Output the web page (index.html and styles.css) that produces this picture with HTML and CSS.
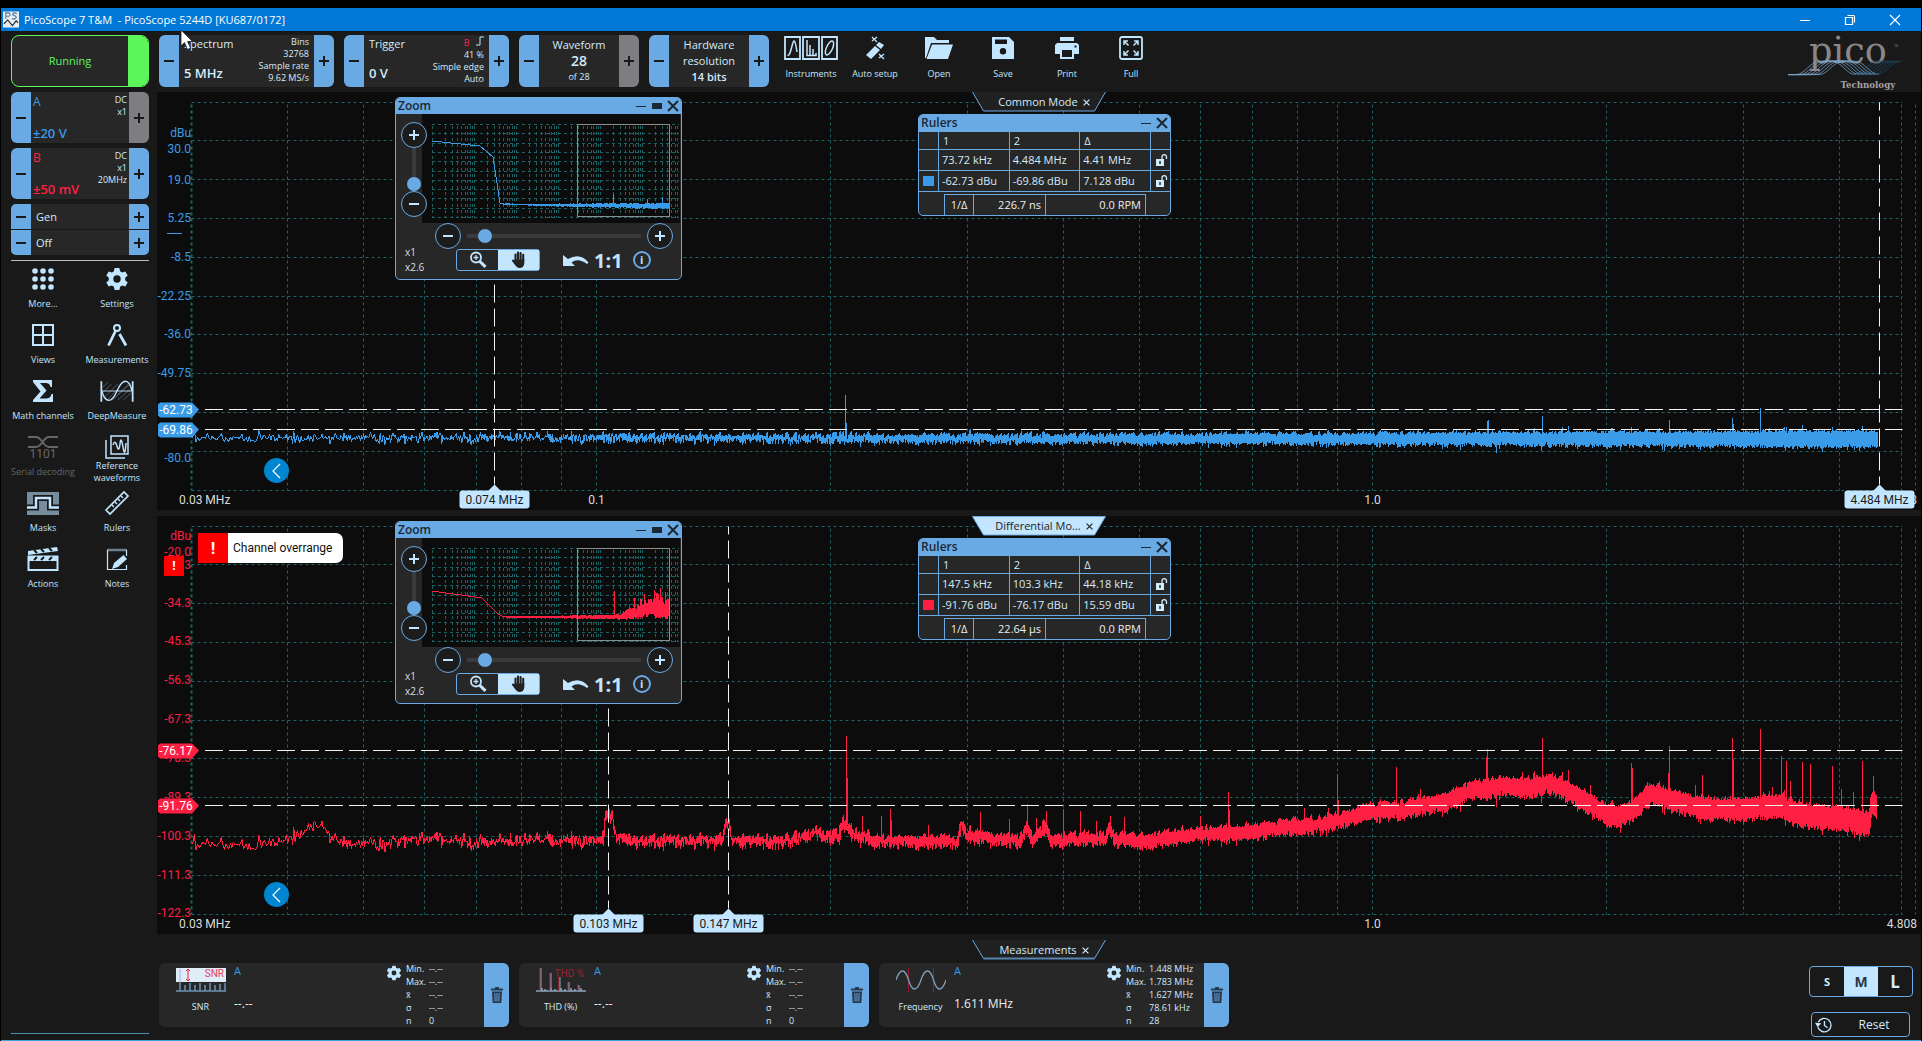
FILE: index.html
```html
<!DOCTYPE html>
<html lang="en">
<head>
<meta charset="utf-8">
<title>PicoScope 7 T&amp;M</title>
<link rel="stylesheet" href="styles.css">
</head>
<body>
<svg class="sprite" aria-hidden="true">
  <symbol id="minus" viewBox="0 0 12 12"><path d="M1 6H11" stroke="currentColor" stroke-width="2"/></symbol>
  <symbol id="plus" viewBox="0 0 12 12"><path d="M1 6H11M6 1V11" stroke="currentColor" stroke-width="2"/></symbol>
  <symbol id="cross" viewBox="0 0 12 12"><path d="M1 1L11 11M11 1L1 11" stroke="currentColor" stroke-width="2"/></symbol>
  <symbol id="dash" viewBox="0 0 12 12"><path d="M1 6.500H11" stroke="currentColor"/></symbol>
  <symbol id="block" viewBox="0 0 12 12"><path d="M1 3H11V9H1Z" fill="currentColor"/></symbol>
  <symbol id="gear" viewBox="0 0 24 24"><path fill="currentColor" fill-rule="evenodd" d="M9.600 1h4.800l.7 3.200 2 1.200 3.200-1 2.400 4.200-2.500 2.200v2.400l2.500 2.200-2.400 4.200-3.200-1-2 1.200-.7 3.200H9.600l-.7-3.200-2-1.200-3.200 1-2.400-4.200 2.500-2.200v-2.400L1.300 8.600l2.400-4.200 3.200 1 2-1.200zM12 8.300a3.700 3.700 0 1 0 0 7.400 3.700 3.700 0 0 0 0-7.400z"/></symbol>
  <symbol id="lock" viewBox="0 0 14 14"><path d="M2 6H10V13H2Z" fill="currentColor"/><path d="M8 6V4A2 2.200 0 0 1 12.500 4V6" fill="none" stroke="currentColor" stroke-width="1.300"/><path d="M6 8V11" stroke="#282828" stroke-width="1.500"/></symbol>
  <symbol id="trash" viewBox="0 0 14 18"><path fill="currentColor" d="M5 1H9V2.500H13V4.500H1V2.500H5ZM2 5.500H12L11.300 17H2.700Z"/><path d="M4.800 7L5.200 15.500M7 7V15.500M9.200 7L8.800 15.500" stroke="#6aaae4" stroke-width=".9"/></symbol>
  <symbol id="hand" viewBox="0 0 18 18"><path d="M5.500 10V3.500M8 9V1.500M10.600 9V2M13.200 10V3.800M3 9.500L6.500 14" fill="none" stroke="currentColor" stroke-width="2.100" stroke-linecap="round"/><path d="M4.500 8.500H14.300V12Q14 17 9.500 17Q6.500 17 5 13Z" fill="currentColor"/></symbol>
  <symbol id="magnify" viewBox="0 0 18 18"><circle cx="7" cy="6.500" r="5" fill="none" stroke="currentColor" stroke-width="1.800"/><path d="M4.500 6.500H9.500M7 4V9" stroke="currentColor" stroke-width="1.300"/><path d="M10.800 10.300L16.500 15.800" stroke="currentColor" stroke-width="3"/></symbol>
  <symbol id="undo" viewBox="0 0 26 14"><path d="M0 2V13H12L8.500 9.500Q15 4.500 24 11L25.500 9.500Q17 -1 5 6Z" fill="currentColor"/></symbol>
</svg>

<header class="titlebar">
  <svg class="appicon" viewBox="0 0 17 17"><path d="M0 0H17V17H0Z" fill="#e8eef2"/><path d="M3 8V1.500H5.500Q7.500 1.500 7.500 3.300T5.500 5H3M14.500 2.500Q13.500 1.300 11.500 1.500Q9.800 2 10.500 3.800L13.500 5Q15 7 12.500 7.800H9.500" fill="none" stroke="#4a7f98" stroke-width="1.200"/><path d="M1 13L5 9L10 15L14 10L16 12" fill="none" stroke="#222" stroke-width="1.200"/></svg>
  <h1>PicoScope 7 T&amp;M &nbsp;- PicoScope 5244D [KU687/0172]</h1>
  <div class="wincontrols">
    <button aria-label="Minimise"><svg viewBox="0 0 12 12"><path d="M1 6.500H11" stroke="#fff"/></svg></button>
    <button aria-label="Restore"><svg viewBox="0 0 12 12"><path d="M1.500 3.500H8.500V10.500H1.500ZM3.500 1.500H9.500Q10.500 1.500 10.500 2.500V8.500" fill="none" stroke="#fff" stroke-width="1.200"/></svg></button>
    <button aria-label="Close"><svg viewBox="0 0 12 12"><path d="M1 1L11 11M11 1L1 11" stroke="#fff" stroke-width="1.200"/></svg></button>
  </div>
</header>

<div class="app">
  <aside class="sidebar">
    <button class="running"><span>Running</span></button>

    <section class="stepper channel ch-a">
      <button class="step" aria-label="Lower range A"><svg><use href="#minus"/></svg></button>
      <div class="body"><b class="name">A</b><ul><li>DC</li><li>x1</li></ul><b class="range">±20 V</b></div>
      <button class="step off" aria-label="Raise range A"><svg><use href="#plus"/></svg></button>
    </section>
    <section class="stepper channel ch-b">
      <button class="step" aria-label="Lower range B"><svg><use href="#minus"/></svg></button>
      <div class="body"><b class="name">B</b><ul><li>DC</li><li>x1</li><li>20MHz</li></ul><b class="range">±50 mV</b></div>
      <button class="step" aria-label="Raise range B"><svg><use href="#plus"/></svg></button>
    </section>
    <section class="gen">
      <div class="genrow"><button class="step" aria-label="Previous generator"><svg><use href="#minus"/></svg></button><span>Gen</span><button class="step" aria-label="Next generator"><svg><use href="#plus"/></svg></button></div>
      <div class="genrow"><button class="step" aria-label="Previous output"><svg><use href="#minus"/></svg></button><span>Off</span><button class="step" aria-label="Next output"><svg><use href="#plus"/></svg></button></div>
    </section>
    <hr>
    <nav class="menu">
      <button><svg viewBox="0 0 24 24"><g fill="currentColor"><circle cx="4" cy="4" r="2.800"/><circle cx="12" cy="4" r="2.800"/><circle cx="20" cy="4" r="2.800"/><circle cx="4" cy="12" r="2.800"/><circle cx="12" cy="12" r="2.800"/><circle cx="20" cy="12" r="2.800"/><circle cx="4" cy="20" r="2.800"/><circle cx="12" cy="20" r="2.800"/><circle cx="20" cy="20" r="2.800"/></g></svg><span>More...</span></button>
      <button><svg viewBox="0 0 24 24"><use href="#gear"/></svg><span>Settings</span></button>
      <button><svg viewBox="0 0 24 24"><path d="M2 2H22V22H2ZM12 2V22M2 12H22" fill="none" stroke="currentColor" stroke-width="2"/></svg><span>Views</span></button>
      <button><svg viewBox="0 0 24 24"><circle cx="12" cy="5" r="3" fill="none" stroke="currentColor" stroke-width="2"/><path d="M12 1V3" stroke="currentColor" stroke-width="2"/><path d="M10.500 8L3.500 22.500M14.500 11L21 22.500" stroke="currentColor" stroke-width="2.800"/></svg><span>Measurements</span></button>
      <button><svg viewBox="0 0 24 24"><path d="M2 1H21V8H19.500Q19 4 14.500 4H9L15.500 11.500L8.500 19.500H15Q19.500 19.500 20.500 15H22V23H2V21L9.500 12.500L2 3Z" fill="currentColor"/></svg><span>Math channels</span></button>
      <button><svg class="wide" viewBox="0 0 38 24"><path d="M3 8L9 2M3 14L13 4M4 20L20 4M8 22L20 10M14 22L34 4M20 22L35 9M26 22L35 14M20 16L32 4" stroke="#5d7586" stroke-width=".8"/><path d="M1.500 1V24M36.500 1V24" stroke="currentColor" stroke-width="2"/><path d="M2 12H36" stroke="currentColor"/><path d="M2 12C6 26 13 26 19 12S32 -3 36 12" fill="none" stroke="currentColor" stroke-width="1.500"/></svg><span>DeepMeasure</span></button>
      <button disabled><svg class="wide" viewBox="0 0 32 24"><path d="M1 2H9C15 2 16 12 22 12H31M1 12H9C15 12 16 2 22 2H31" fill="none" stroke="currentColor" stroke-width="2"/><text x="16" y="23" text-anchor="middle">1101</text></svg><span>Serial decoding</span></button>
      <button><svg viewBox="0 0 24 24"><path d="M6 1H23V19H6ZM1 5V23H20" fill="none" stroke="currentColor" stroke-width="1.500"/><path d="M8 10Q10 4 12 11T15 9T18 12T21 8" fill="none" stroke="currentColor" stroke-width="1.500"/></svg><span>Reference waveforms</span></button>
      <button><svg class="wide" viewBox="0 0 32 24"><path d="M0 1H32V24H0Z" fill="#788d9b"/><path d="M0 16.500H9V7H23V16.500H32" fill="none" stroke="#191919" stroke-width="6"/><path d="M0 16.500H9V7H23V16.500H32" fill="none" stroke="currentColor" stroke-width="2.500"/></svg><span>Masks</span></button>
      <button><svg viewBox="0 0 24 24"><path d="M1 19L19 1L23 5L5 23Z" fill="none" stroke="currentColor" stroke-width="1.700"/><path d="M7 14L9 16M10 11L12 13M13 8L15 10M16 5L18 7" stroke="currentColor" stroke-width="1.400"/></svg><span>Rulers</span></button>
      <button><svg class="wide" viewBox="0 0 32 24"><path d="M1.500 9.500H30.500V23H1.500Z" fill="none" stroke="currentColor" stroke-width="2"/><path d="M1 4L30 0L31 4L1 8ZM1 9H31V14H1Z" fill="currentColor"/><path d="M7 3L10 6M14 2L17 5M22 1L25 4M7 13L10 10M14 13L17 10M22 13L25 10" stroke="#191919" stroke-width="2"/></svg><span>Actions</span></button>
      <button><svg viewBox="0 0 24 24"><path d="M2.500 3V22.500H21.500V18M21.500 9V3" fill="none" stroke="currentColor" stroke-width="1.200"/><path d="M2.500 3H21.500" stroke="currentColor" stroke-width="2.500" stroke-dasharray="1 1"/><path d="M7 22L9 16L18.500 8L22 12L13 20Z" fill="currentColor"/></svg><span>Notes</span></button>
    </nav>
    <hr class="last">
  </aside>

  <main>
    <div class="toolbar">
      <section class="stepper spectrum">
        <button class="step" aria-label="Lower frequency"><svg><use href="#minus"/></svg></button>
        <div class="body"><span class="name">Spectrum</span><ul><li>Bins</li><li>32768</li><li>Sample rate</li><li>9.62 MS/s</li></ul><b class="value">5 MHz</b></div>
        <button class="step" aria-label="Raise frequency"><svg><use href="#plus"/></svg></button>
      </section>
      <section class="stepper trigger">
        <button class="step" aria-label="Lower trigger"><svg><use href="#minus"/></svg></button>
        <div class="body"><span class="name">Trigger</span><ul><li><span class="redtext">B</span> <svg class="edge" viewBox="0 0 8 10"><path d="M0 9H4V1H8" fill="none" stroke="#c2e6ff"/></svg></li><li>41 %</li><li>Simple edge</li><li>Auto</li></ul><b class="value">0 V</b></div>
        <button class="step" aria-label="Raise trigger"><svg><use href="#plus"/></svg></button>
      </section>
      <section class="stepper narrow">
        <button class="step" aria-label="Previous waveform"><svg><use href="#minus"/></svg></button>
        <div class="body"><span>Waveform</span><b class="count">28</b><small>of 28</small></div>
        <button class="step off" aria-label="Next waveform"><svg><use href="#plus"/></svg></button>
      </section>
      <section class="stepper narrow">
        <button class="step" aria-label="Lower resolution"><svg><use href="#minus"/></svg></button>
        <div class="body"><span>Hardware resolution</span><b>14 bits</b></div>
        <button class="step" aria-label="Raise resolution"><svg><use href="#plus"/></svg></button>
      </section>
      <nav class="tools">
        <button><svg class="xwide" viewBox="0 0 54 24"><path d="M1 1H16V23H1ZM19 1H35V23H19ZM38 1H53V23H38Z" fill="none" stroke="currentColor" stroke-width="1.800"/><path d="M3.500 19C5 20 6 18 8 10S11 3 13 16M23 4V19.500H32V17M26 9V19M29 13V19" fill="none" stroke="currentColor" stroke-width="1.500"/><ellipse cx="45.500" cy="12" rx="3" ry="7.500" transform="rotate(25 45.500 12)" fill="none" stroke="currentColor" stroke-width="1.500"/></svg><span>Instruments</span></button>
        <button><svg viewBox="0 0 24 24"><path d="M3 19L12 10L17 14L8 23ZM13 9L16 6L21 9L18 13Z" fill="currentColor"/><path d="M9 1L14 6M14 1L9 5M16 18L21 23M21 18L16 22" stroke="currentColor" stroke-width="1.300"/></svg><span>Auto setup</span></button>
        <button><svg class="folder" viewBox="0 0 28 24"><path d="M0 1H9L12 4H24V7H6L1 22H0Z" fill="currentColor"/><path d="M7 8.500H28L23 23H1.500Z" fill="currentColor"/></svg><span>Open</span></button>
        <button><svg viewBox="0 0 24 24"><path fill-rule="evenodd" d="M1 1H18L23 6V23H1ZM4 3.500V8H16V3.500ZM12 12A3.200 3.200 0 1 0 12 18.400A3.200 3.200 0 0 0 12 12Z" fill="currentColor"/></svg><span>Save</span></button>
        <button><svg viewBox="0 0 24 24"><path fill-rule="evenodd" d="M5 1H19V5H5ZM2 7H22L24 9V18H19V23H5V18H0V9ZM7 14V21H17V14ZM19.500 9.500V11.500H21.500V9.500Z" fill="currentColor"/></svg><span>Print</span></button>
        <button><svg viewBox="0 0 24 24"><rect x="1" y="1" width="22" height="22" rx="2" fill="none" stroke="currentColor" stroke-width="1.800"/><path d="M5 9V5H9M5 5L9.500 9.500M15 5H19V9M19 5L14.500 9.500M5 15V19H9M5 19L9.500 14.500M19 15V19H15M19 19L14.500 14.500" fill="none" stroke="currentColor" stroke-width="1.500"/></svg><span>Full</span></button>
      </nav>
      <svg class="logo" viewBox="0 0 122 58" role="img" aria-label="pico Technology">
        <text class="pico" x="62" y="29" text-anchor="middle">pico</text>
        <text class="reg" x="110" y="13">®</text>
        <g id="waves" fill="none" stroke-width=".8"></g>
        <text class="tech" x="111" y="55" text-anchor="end">Technology</text>
      </svg>
    </div>

    <section class="panel" data-chart="a">
      <svg class="plot"></svg>
      <div class="tab"><svg viewBox="0 0 134 20"><path d="M.5 0L11.500 19H122.500L133.500 0" fill="#202020" stroke="#6aaae4"/></svg><span>Common Mode</span><button aria-label="Close view"><svg><use href="#cross"/></svg></button></div>
      <button class="back" aria-label="Back"><svg viewBox="0 0 24 24"><path d="M15 5L8 12L15 19" fill="none" stroke="#fff" stroke-width="1.200"/></svg></button>
      <section class="window zoom">
        <header><h2>Zoom</h2><svg><use href="#dash"/></svg><svg><use href="#block"/></svg><svg><use href="#cross"/></svg></header>
        <div class="zoomview">
          <div class="vctl"><button class="round" aria-label="Zoom in vertically"><svg><use href="#plus"/></svg></button><input type="range" class="vrange" aria-label="Vertical zoom" value="0"><button class="round" aria-label="Zoom out vertically"><svg><use href="#minus"/></svg></button></div>
          <svg class="mini" viewBox="0 0 258 109"></svg>
        </div>
        <div class="hctl"><button class="round" aria-label="Zoom out horizontally"><svg><use href="#minus"/></svg></button><input type="range" class="hrange" aria-label="Horizontal zoom" value="7"><button class="round" aria-label="Zoom in horizontally"><svg><use href="#plus"/></svg></button></div>
        <div class="zoomtools"><p>x1<br>x2.6</p><div class="pair"><button aria-label="Marquee"><svg><use href="#magnify"/></svg></button><button class="on" aria-label="Pan"><svg><use href="#hand"/></svg></button></div><button class="plain undo" aria-label="Undo"><svg><use href="#undo"/></svg></button><button class="plain one">1:1</button><button class="info" aria-label="Information">i</button></div>
      </section>
      <section class="window rulers">
        <header><h2>Rulers</h2><svg><use href="#dash"/></svg><svg><use href="#cross"/></svg></header>
        <table>
          <tr><th></th><th>1</th><th>2</th><th>Δ</th><th></th></tr>
          <tr><td></td><td>73.72 kHz</td><td>4.484 MHz</td><td>4.41 MHz</td><td><svg><use href="#lock"/></svg></td></tr>
          <tr><td><i class="swatch blue"></i></td><td>-62.73 dBu</td><td>-69.86 dBu</td><td>7.128 dBu</td><td><svg><use href="#lock"/></svg></td></tr>
        </table>
        <div class="inverse"><span>1/Δ</span><span>226.7 ns</span><span>0.0 RPM</span></div>
      </section>
    </section>

    <section class="panel" data-chart="b">
      <svg class="plot"></svg>
      <div class="tab light"><svg viewBox="0 0 134 20"><path d="M.5 .5L11.500 19H122.500L133.500 .5Z" fill="#c2e6ff" stroke="#6aaae4"/></svg><span>Differential Mo...</span><button aria-label="Close view"><svg><use href="#cross"/></svg></button></div>
      <button class="back" aria-label="Back"><svg viewBox="0 0 24 24"><path d="M15 5L8 12L15 19" fill="none" stroke="#fff" stroke-width="1.200"/></svg></button>
      <b class="flag">!</b>
      <p class="overrange"><b>!</b><span>Channel overrange</span></p>
      <section class="window zoom">
        <header><h2>Zoom</h2><svg><use href="#dash"/></svg><svg><use href="#block"/></svg><svg><use href="#cross"/></svg></header>
        <div class="zoomview">
          <div class="vctl"><button class="round" aria-label="Zoom in vertically"><svg><use href="#plus"/></svg></button><input type="range" class="vrange" aria-label="Vertical zoom" value="0"><button class="round" aria-label="Zoom out vertically"><svg><use href="#minus"/></svg></button></div>
          <svg class="mini" viewBox="0 0 258 109"></svg>
        </div>
        <div class="hctl"><button class="round" aria-label="Zoom out horizontally"><svg><use href="#minus"/></svg></button><input type="range" class="hrange" aria-label="Horizontal zoom" value="7"><button class="round" aria-label="Zoom in horizontally"><svg><use href="#plus"/></svg></button></div>
        <div class="zoomtools"><p>x1<br>x2.6</p><div class="pair"><button aria-label="Marquee"><svg><use href="#magnify"/></svg></button><button class="on" aria-label="Pan"><svg><use href="#hand"/></svg></button></div><button class="plain undo" aria-label="Undo"><svg><use href="#undo"/></svg></button><button class="plain one">1:1</button><button class="info" aria-label="Information">i</button></div>
      </section>
      <section class="window rulers">
        <header><h2>Rulers</h2><svg><use href="#dash"/></svg><svg><use href="#cross"/></svg></header>
        <table>
          <tr><th></th><th>1</th><th>2</th><th>Δ</th><th></th></tr>
          <tr><td></td><td>147.5 kHz</td><td>103.3 kHz</td><td>44.18 kHz</td><td><svg><use href="#lock"/></svg></td></tr>
          <tr><td><i class="swatch red"></i></td><td>-91.76 dBu</td><td>-76.17 dBu</td><td>15.59 dBu</td><td><svg><use href="#lock"/></svg></td></tr>
        </table>
        <div class="inverse"><span>1/Δ</span><span>22.64 µs</span><span>0.0 RPM</span></div>
      </section>
    </section>

    <footer class="measurements">
      <div class="tab"><svg viewBox="0 0 134 20"><path d="M.5 0L11.500 18.500H122.500L133.500 0" fill="#202020" stroke="#6aaae4"/><path d="M11.500 18.500H122.500" stroke="#5684b0" stroke-width="2"/></svg><span>Measurements</span><button aria-label="Close measurements"><svg><use href="#cross"/></svg></button></div>
      <div class="cards">
        <article class="card">
          <div class="kind"><svg viewBox="0 0 50 24"><path d="M0 0H50V14H0Z" fill="#e0edf8"/><path d="M0 23H50M4 14V23M9 17V23M14 15V23M19 17V23M24 15V23M29 17V23M34 15V23M39 17V23M44 16V23M49 15V23" stroke="#6f93b4" stroke-width="1.500"/><path d="M4 1V14" stroke="#a9cbe8" stroke-width="1.500"/><path d="M12 1V13M10 3L12 1L14 3M10 11L12 13L14 11" fill="none" stroke="#e8203a"/><text x="48" y="9" text-anchor="end">SNR</text></svg><span>SNR</span></div>
          <div class="reading"><b>A</b><output>--.--</output></div>
          <svg class="cog"><use href="#gear"/></svg>
          <dl><dt>Min.</dt><dd>--.--</dd><dt>Max.</dt><dd>--.--</dd><dt>x̄</dt><dd>--.--</dd><dt>σ</dt><dd>--.--</dd><dt>n</dt><dd>0</dd></dl>
          <button class="bin" aria-label="Delete SNR"><svg><use href="#trash"/></svg></button>
        </article>
        <article class="card">
          <div class="kind"><svg class="thd" viewBox="0 0 50 24"><path d="M0 23H50M6 20V23M9 21V23M15 20V23M19 21V23M25 20V23M29 21V23M35 20V23M39 21V23M45 20V23" stroke="#8ba6bf" stroke-width="1.500"/><path d="M4 0V23M14 5V23M23 9V23M32 14V23M42 17V23" stroke="#b82036" stroke-width="1.200"/><path d="M5 0V23M15 5V23M24 9V23M33 14V23M43 17V23" stroke="#8ba6bf"/><text x="48" y="9" text-anchor="end">THD %</text></svg><span>THD (%)</span></div>
          <div class="reading"><b>A</b><output>--.--</output></div>
          <svg class="cog"><use href="#gear"/></svg>
          <dl><dt>Min.</dt><dd>--.--</dd><dt>Max.</dt><dd>--.--</dd><dt>x̄</dt><dd>--.--</dd><dt>σ</dt><dd>--.--</dd><dt>n</dt><dd>0</dd></dl>
          <button class="bin" aria-label="Delete THD"><svg><use href="#trash"/></svg></button>
        </article>
        <article class="card">
          <div class="kind"><svg viewBox="0 0 50 24"><path d="M12.500 0V24M37.500 0V24" stroke="#8c1f2c"/><path d="M0 12C4 0 9 0 12.500 12S21 24 25 12S34 0 37.500 12S46 24 50 12" fill="none" stroke="#7f9fbd" stroke-width="1.300"/></svg><span>Frequency</span></div>
          <div class="reading"><b>A</b><output>1.611 MHz</output></div>
          <svg class="cog"><use href="#gear"/></svg>
          <dl><dt>Min.</dt><dd>1.448 MHz</dd><dt>Max.</dt><dd>1.783 MHz</dd><dt>x̄</dt><dd>1.627 MHz</dd><dt>σ</dt><dd>78.61 kHz</dd><dt>n</dt><dd>28</dd></dl>
          <button class="bin" aria-label="Delete Frequency"><svg><use href="#trash"/></svg></button>
        </article>
        <div class="sizing">
          <div class="sizes"><button class="s">S</button><button class="m">M</button><button class="l">L</button></div>
          <button class="reset"><svg viewBox="0 0 20 20"><path d="M3.500 7A7.500 7.500 0 1 1 3.200 12.500" fill="none" stroke="#c2e6ff" stroke-width="1.500"/><path d="M0 7.500L7 8L3 12.500Z" fill="#c2e6ff"/><path d="M10.500 5.500V10.500L14 13" fill="none" stroke="#c2e6ff" stroke-width="1.500"/></svg><span>Reset</span></button>
        </div>
      </div>
    </footer>
  </main>
</div>
<svg class="cursor" viewBox="0 0 14 22" aria-hidden="true"><path d="M1 1V17L4.500 13.500L7.500 20.500L10.500 19L7.500 12.500H12.500Z" fill="#fff" stroke="#222" stroke-width=".8"/></svg>
<script src="plots.js"></script>
</body>
</html>
```
FILE: styles.css
```css
* { box-sizing: border-box; }
html, body { height: 100%; }
body {
  margin: 0; padding: 8px 1px 0; background: #000; color: #d4ebfb;
  font: 12px/16px "Open Sans", "Noto Sans", sans-serif;
  display: flex; flex-direction: column;
}
button { font: inherit; color: inherit; background: none; border: 0; padding: 0; margin: 0; }
h1, h2, p, ul, dl, dd { margin: 0; padding: 0; }
ul { list-style: none; }
svg { display: block; flex: none; }
.sprite { position: absolute; width: 0; height: 0; }
.cursor { position: absolute; left: 180px; top: 29px; width: 14px; height: 22px; }

.titlebar { display: flex; align-items: center; height: 23px; flex: none; background: #0078d7; padding: 0 4px 0 2px; gap: 5px; }
.titlebar h1 { font-size: 11px; font-weight: 400; color: #fff; flex: 1; }
.appicon { width: 16px; height: 17px; }
.wincontrols { display: flex; }
.wincontrols button { width: 45px; display: grid; place-items: center; }
.wincontrols svg { width: 12px; height: 12px; }

.app { flex: 1; min-height: 0; display: grid; grid-template-columns: 156px minmax(0, 1fr); background: #191919; border-bottom: 1px solid #3fa7dc; }

.sidebar { display: flex; flex-direction: column; gap: 5px; padding: 4px 0 6px; }
.running, .stepper.channel, .gen, hr { margin: 0 8px 0 10px; }
.running { height: 52px; border: 1px solid #5ff55f; border-radius: 8px; background: #272727; color: #5ff564; display: flex; align-items: center; overflow: hidden; font-size: 11px; }
.running span { flex: 1; }
.running::after { content: ""; width: 20px; align-self: stretch; background: #5cf55a; }
.stepper { display: flex; height: 52px; border-radius: 6px; overflow: hidden; background: #272727; }
.channel { height: 51px; }
.step { width: 20px; flex: none; background: #6aaae4; color: #191919; display: grid; place-items: center; }
.step svg { width: 12px; height: 12px; }
.step.off { background: #7d7d82; }
.stepper .body { flex: 1; position: relative; display: grid; grid-template-columns: auto 1fr; grid-template-rows: auto 1fr; padding: 2px 2px 1px; }
.body ul { grid-column: 2; grid-row: 1 / 3; text-align: right; font-size: 9px; line-height: 12px; }
.channel .range, .stepper .value { grid-column: 1; grid-row: 2; align-self: end; white-space: nowrap; font-weight: 600; font-size: 13px; }
.channel .name { font-weight: 400; }
.channel .range { width: 0; padding-bottom: 1px; }
.ch-a b { color: #3a99e8; }
.ch-b b { color: #ff1f43; }
.gen { display: grid; gap: 1px; border-radius: 5px; overflow: hidden; height: 51px; }
.genrow { display: flex; align-items: center; background: #272727; height: 25px; }
.genrow span { flex: 1; padding-left: 5px; font-size: 11px; }
.genrow .step { height: 25px; }
hr { border: 0; border-top: 1px solid #bcbcbc; width: 138px; height: 1px; }
hr.last { margin-top: auto; border-color: #4d8fae; }
.menu { display: grid; grid-template-columns: 74px 74px; grid-auto-rows: 56px; margin-left: 5px; padding-top: 1px; }
.menu button, .tools button { display: flex; flex-direction: column; align-items: center; color: #c2e6ff; font-size: 9px; line-height: 12px; }
.menu span { min-height: 26px; width: 74px; display: grid; place-items: center; }
.menu svg { width: 24px; height: 24px; overflow: visible; }
.menu svg.wide { width: 34px; }
.menu button:disabled { color: #666; }
.menu text { font: 12px Roboto, sans-serif; fill: currentColor; }

main { display: flex; flex-direction: column; min-width: 0; }
.toolbar { height: 61px; flex: none; display: flex; align-items: flex-start; gap: 10px; padding: 4px 13px 0 2px; }
.spectrum { width: 175px; }
.trigger { width: 165px; }
.spectrum .body, .trigger .body { padding: 1px 5px 2px; }
.stepper .value { padding-bottom: 4px; }
.spectrum .name, .trigger .name { font-size: 11px; }
.spectrum ul { margin-left: -20px; }
.redtext { color: #ff1f43; }
.edge { display: inline-block; width: 8px; height: 10px; margin-left: 4px; }
.narrow { width: 120px; }
.narrow .body { display: flex; flex-direction: column; align-items: center; justify-content: center; text-align: center; font-size: 11px; padding: 0; }
.narrow b { font-weight: 600; font-size: 11px; }
.narrow .count { font-size: 14px; }
.narrow small { font-size: 9px; }
.tools { display: flex; padding-top: 1px; }
.tools button { width: 64px; gap: 8px; white-space: nowrap; }
.tools svg { width: 24px; height: 24px; }
.tools svg.xwide { width: 54px; }
.tools svg.folder { width: 28px; }
.logo { width: 122px; height: 56px; margin-left: auto; overflow: visible; }
.pico { font: 38px "DejaVu Serif", serif; fill: #8a8686; }
.reg { font: 6px "Liberation Serif", serif; fill: #8a8686; }
.tech { font: bold 9px "DejaVu Serif", serif; fill: #a5a1a1; }

.panel { position: relative; flex: 1; min-height: 360px; background: #0c0c0c; }
.panel + .panel { margin-top: 6px; }
.plot { position: absolute; inset: 0; width: 100%; height: 100%; }
.plot text { font: 12px Roboto, sans-serif; }
.tab { position: absolute; left: 882px; margin-left: -67px; top: 0; width: 134px; height: 20px; display: flex; align-items: center; justify-content: center; gap: 5px; font-size: 11px; }
.tab > svg { position: absolute; inset: 0; width: 134px; height: 20px; }
.tab span, .tab button { position: relative; }
.tab span { padding-left: 10px; }
.tab button svg { width: 7px; height: 7px; }
.tab.light { color: #222; }
.back { position: absolute; left: 107px; bottom: 27px; width: 25px; height: 25px; border-radius: 50%; background: #0085d1; display: grid; place-items: center; }
.back svg { width: 24px; height: 24px; }
.flag { position: absolute; left: 7px; top: 40px; width: 20px; height: 20px; background: #f00; color: #fff; text-align: center; line-height: 20px; }
.overrange { position: absolute; left: 41px; top: 17px; height: 30px; display: flex; align-items: center; background: #fff; color: #111; border-radius: 0 7px 7px 0; font: 12px/30px Roboto, sans-serif; }
.overrange b { width: 30px; background: #f00; color: #fff; text-align: center; font-size: 17px; }
.overrange span { padding: 0 11px 0 5px; }

.window { position: absolute; background: #272727; border: 1px solid #6aaae4; border-radius: 5px; overflow: hidden; }
.window header { height: 16px; background: #6aaae4; color: #1c2733; display: flex; align-items: center; gap: 4px; padding: 0 2px; }
.window h2 { flex: 1; font-size: 12px; font-weight: 600; line-height: 16px; }
.window header svg { width: 12px; height: 12px; }
.zoom { left: 238px; top: 5px; width: 287px; height: 183px; display: flex; flex-direction: column; }
.zoomview { display: flex; height: 109px; flex: none; }
.vctl { width: 26px; padding: 8px 0 0 10px; display: flex; flex-direction: column; align-items: center; position: relative; }
.round { width: 26px; height: 26px; flex: none; border: 1px solid #6aaae4; border-radius: 50%; display: grid; place-items: center; background: #1c1c1c; color: #c2e6ff; }
.round svg { width: 12px; height: 12px; }
.mini { width: 258px; height: 109px; background: #0c0c0c; }
.vctl .round { z-index: 1; }
input[type=range] { appearance: none; margin: 0; background: none; }
.hrange { flex: 1; min-width: 0; height: 14px; }
.vrange { writing-mode: vertical-lr; direction: rtl; width: 14px; height: 43px; margin: 0 0 3px; }
input::-webkit-slider-runnable-track { background: #3a3a3a; }
.hrange::-webkit-slider-runnable-track { height: 4px; }
.vrange::-webkit-slider-runnable-track { width: 4px; }
input::-webkit-slider-thumb { appearance: none; width: 14px; height: 14px; border-radius: 50%; background: #6aaae4; }
.hrange::-webkit-slider-thumb { margin-top: -5px; }
.vrange::-webkit-slider-thumb { margin-left: -5px; }
.hctl { display: flex; align-items: center; gap: 6px; height: 26px; flex: none; padding: 0 8px 0 39px; }
.zoomtools { display: flex; align-items: center; padding-left: 9px; height: 22px; flex: none; font-size: 10px; line-height: 15px; }
.zoomtools p { width: 51px; color: #ddd; }
.pair { display: flex; width: 84px; height: 22px; border: 1px solid #6aaae4; border-radius: 3px; color: #c2e6ff; margin-right: 23px; }
.pair button { flex: 1; display: grid; place-items: center; }
.pair .on { background: #c2e6ff; color: #222; }
.pair svg { width: 18px; height: 18px; }
.plain { color: #c2e6ff; }
.undo svg { width: 26px; height: 14px; }
.one { font-size: 20px; font-weight: 700; padding: 0 10px 0 5px; }
.info { width: 18px; height: 18px; border: 2px solid #6aaae4; border-radius: 50%; color: #c2e6ff; font-weight: 700; font-size: 11px; line-height: 14px; }

.rulers { left: 761px; top: 22px; width: 253px; height: 102px; font-size: 11px; }
.rulers table { border-collapse: collapse; width: 253px; margin-left: -1px; table-layout: fixed; }
.rulers th, .rulers td { border: 1px solid #6aaae4; padding: 0 0 0 3px; text-align: left; font-weight: 400; height: 21px; line-height: 16px; white-space: nowrap; color: #d4ebfb; }
.rulers th { height: 18px; padding-left: 4px; }
.rulers th:first-child, .rulers th:last-child { width: 20px; }
.rulers td svg { width: 14px; height: 14px; }
.swatch { display: block; width: 11px; height: 10px; margin-left: 1px; }
.swatch.blue { background: #3a99e8; }
.swatch.red { background: #ff1f43; }
.inverse { display: flex; margin: 2px 24px 0 25px; border: 1px solid #6aaae4; border-bottom: 0; height: 22px; line-height: 20px; color: #eee; }
.inverse span { border-left: 1px solid #6aaae4; text-align: right; padding-right: 4px; width: 72px; }
.inverse span:first-child { width: 28px; border: 0; text-align: center; padding: 0; }
.inverse span:last-child { flex: 1; }

.measurements { position: relative; height: 106px; flex: none; padding: 29px 8px 0 2px; }
.measurements .tab { top: 6px; }
.cards { display: flex; gap: 10px; }
.card { width: 350px; height: 64px; display: flex; background: #272727; border-radius: 6px; overflow: hidden; }
.kind { width: 66px; padding: 5px 0 0 17px; display: flex; flex-direction: column; gap: 7px; align-items: center; font-size: 9px; white-space: nowrap; }
.kind svg { width: 50px; height: 24px; }
.kind text { font: 10px Roboto, sans-serif; fill: #e8405a; }
.kind .thd text { fill: #a02030; }
.reading { flex: 1; display: flex; flex-direction: column; gap: 17px; padding-left: 9px; font-size: 12px; color: #eee; }
.reading b { font-weight: 400; color: #3a99e8; font-size: 11px; }
.cog { width: 16px; height: 16px; margin: 2px 4px 0 0; color: #c2e6ff; }
dl { width: 78px; display: grid; grid-template-columns: 23px 1fr; grid-auto-rows: 13px; font-size: 9px; line-height: 12px; white-space: nowrap; }
.bin { width: 25px; background: #6aaae4; color: #26384a; display: grid; place-items: center; }
.bin svg { width: 14px; height: 18px; }
.sizing { margin-left: auto; display: flex; flex-direction: column; align-items: flex-end; gap: 15px; padding-top: 3px; }
.sizes { display: flex; width: 104px; height: 31px; border: 1px solid #6aaae4; border-radius: 4px; overflow: hidden; font-weight: 700; }
.sizes button { flex: 1; }
.sizes .s { font-size: 11px; }
.sizes .m { font-size: 14px; background: #c2e6ff; color: #26384a; }
.sizes .l { font-size: 17px; }
.reset { width: 99px; height: 25px; margin-right: 3px; border: 1px solid #6aaae4; border-radius: 4px; display: flex; align-items: center; padding-left: 3px; }
.reset svg { width: 18px; height: 18px; }
.reset span { flex: 1; padding-left: 6px; }
```
FILE: plots.js
```js
const NS = 'http://www.w3.org/2000/svg';
const GRID = '#1b6364';

function el(parent, tag, attrs, text) {
  const node = document.createElementNS(NS, tag);
  for (const key in attrs) node.setAttribute(key, attrs[key]);
  if (text !== undefined) node.textContent = text;
  parent.appendChild(node);
  return node;
}

function random(seed) {
  return () => (seed = (seed * 1664525 + 1013904223) >>> 0) / 4294967296;
}

// Plot space is 1711 x 388 units; one decade spans 776 units.
const charts = {
  a: {
    color: '#3a9be8', unit: 31,
    ticks: [[47, '30.0'], [78, '19.0'], [116, '5.25'], [155, '-8.5'], [194, '-22.25'], [232, '-36.0'], [271, '-49.75'], [356, '-80.0']],
    yRulers: [[307, '-62.73'], [327, '-69.86']],
    xRulers: [[303, '0.074 MHz'], [1688, '4.484 MHz']],
    xLabels: [[405, '0.1'], [1181, '1.0']],
    sigma: 3.6, gain: 0.2, end: 1687,
    level: [[0, 333], [10, 336], [300, 336], [900, 337], [1687, 337]],
    spikes: [[654, 293], [655, 321], [1296, 319], [1297, 318], [1351, 314], [1377, 324], [1440, 325], [1478, 318], [1541, 316], [1542, 322], [1569, 306], [1595, 325], [1611, 323], [1641, 325], [1671, 324]],
    mini: [[10, 27], [58, 32], [71, 43], [78, 89], [81, 90], [120, 91], [247, 92]],
    miniSpikes: [[191, 80], [225, 85], [240, 83]], miniFrom: 81, miniRise: 0
  },
  b: {
    color: '#ff1f43', unit: 10,
    ticks: [[26, '-20.0'], [39, '-23.3'], [77, '-34.3'], [115, '-45.3'], [154, '-56.3'], [193, '-67.3'], [232, '-78.3'], [271, '-89.3'], [310, '-100.3'], [349, '-111.3'], [387, '-122.3']],
    yRulers: [[224, '-76.17'], [279, '-91.76']],
    xRulers: [[417, '0.103 MHz'], [537, '0.147 MHz']],
    xLabels: [[1181, '1.0']],
    sigma: 4.8, gain: 0.3, end: 1686,
    level: [[0, 315], [9, 318], [70, 319], [94, 315], [106, 309], [119, 300], [131, 300], [141, 312], [154, 318], [190, 318], [220, 313], [270, 315], [300, 317], [350, 314], [412, 315], [415, 289], [421, 290], [425, 313], [450, 316], [531, 315], [535, 297], [538, 298], [541, 315], [590, 316], [624, 308], [648, 312], [651, 299], [656, 299], [660, 308], [680, 315], [767, 316], [770, 297], [775, 311], [830, 315], [836, 302], [840, 315], [854, 302], [860, 314], [915, 313], [918, 302], [924, 314], [960, 315], [998, 309], [1060, 307], [1089, 302], [1129, 299], [1154, 293], [1179, 286], [1209, 284], [1229, 281], [1259, 275], [1279, 265], [1309, 261], [1339, 262], [1359, 257], [1379, 267], [1399, 279], [1419, 290], [1429, 291], [1444, 283], [1459, 268], [1474, 272], [1509, 282], [1539, 284], [1589, 280], [1609, 289], [1649, 292], [1669, 297], [1678, 297], [1681, 277], [1686, 280]],
    spikes: [[655, 210], [656, 252], [671, 290], [690, 290], [699, 283], [700, 294], [737, 299], [789, 286], [818, 293], [836, 278], [845, 292], [855, 285], [872, 283], [889, 285], [905, 295], [919, 290], [933, 291], [1009, 290], [1037, 266], [1038, 284], [1113, 282], [1137, 282], [1146, 248], [1147, 274], [1205, 241], [1229, 263], [1295, 231], [1296, 223], [1331, 246], [1351, 212], [1377, 244], [1399, 259], [1440, 237], [1441, 242], [1477, 247], [1478, 220], [1504, 259], [1511, 249], [1541, 212], [1542, 233], [1569, 203], [1581, 261], [1590, 230], [1595, 235], [1599, 255], [1611, 236], [1619, 238], [1641, 240], [1650, 263], [1662, 266], [1671, 235], [1682, 250]],
    mini: [[10, 53], [60, 60], [76, 76], [82, 79], [150, 79], [180, 79], [200, 79], [215, 76], [228, 71], [236, 73], [247, 74]],
    miniSpikes: [[192, 53], [212, 60], [222, 56], [232, 52], [238, 50], [243, 54]], miniFrom: 84, miniRise: 16
  }
};

function levelAt(points, x) {
  for (let i = 1; i < points.length; i++) {
    const [x0, y0] = points[i - 1], [x1, y1] = points[i];
    if (x <= x1) return y0 + (y1 - y0) * (x - x0) / (x1 - x0);
  }
  return points[points.length - 1][1];
}

const half = v => Math.floor(v) + 0.5;

function trace(cfg, kx, ky, rand) {
  const pts = [];
  const noise = () => (rand() + rand() + rand() - 1.5) * 2 * cfg.sigma;
  let x = 0;
  while (x < cfg.end) {
    const bins = 0.6 * Math.pow(10, x / 776);
    const base = levelAt(cfg.level, x);
    if (bins < 2) {
      pts.push([x, base + noise() * 0.8]);
      x += 1 / bins;
    } else {
      let lo = 1e9, hi = -1e9;
      const spread = 0.8 + cfg.gain * Math.max(0, x - 900) / 800;
      for (let i = 0; i < bins; i++) {
        const v = noise() * (rand() < 0.02 ? 1.5 : 1) * spread;
        lo = Math.min(lo, v); hi = Math.max(hi, v);
      }
      pts.push([x, base + lo], [x, base + hi]);
      x += 1;
    }
  }
  let d = 'M' + pts.map(p => (34 + p[0] * kx).toFixed(1) + ' ' + (10 + p[1] * ky).toFixed(1)).join('L');
  for (const [sx, sy] of cfg.spikes) {
    d += `M${half(34 + sx * kx)} ${(10 + sy * ky).toFixed(1)}V${(10 + levelAt(cfg.level, sx) * ky).toFixed(1)}`;
  }
  return d;
}

function drawPlot(panel) {
  const cfg = charts[panel.dataset.chart];
  const svg = panel.querySelector('.plot');
  svg.replaceChildren();
  const w = panel.clientWidth, h = panel.clientHeight;
  const kx = (w - 53) / 1711, ky = (h - 30) / 388;
  const X = v => half(34 + v * kx), Y = v => half(10 + v * ky);
  const right = X(1711), bottom = Y(388);

  let grid = '';
  for (let i = 0; i <= 10; i++) grid += `M${X(0)} ${Y(i * 38.8)}H${right}`;
  for (const f of [0.04, 0.05, 0.06, 0.07, 0.08, 0.09, 0.1, 0.2, 0.3, 0.4, 0.5, 0.6, 0.7, 0.8, 0.9, 1, 2, 3, 4, 4.808, 5])
    grid += `M${X(Math.log10(f / 0.03) * 776)} ${Y(2)}V${bottom}`;
  el(svg, 'path', { d: grid, stroke: GRID, 'stroke-dasharray': '3 3', fill: 'none' });
  el(svg, 'path', { d: `M${X(0)} ${Y(2)}V${bottom}`, stroke: GRID, 'stroke-width': 2, 'stroke-dasharray': '3 3' });

  const label = (x, y, text, anchor, fill) => el(svg, 'text', { x, y: y + 4, 'text-anchor': anchor, fill }, text);
  label(34, 10 + cfg.unit * ky, 'dBu', 'end', cfg.color);
  for (const [y, t] of cfg.ticks) label(34, 10 + y * ky, t, 'end', cfg.color);
  for (const [x, t] of cfg.xLabels) label(X(x), bottom + 9, t, 'middle', '#dcdcdc');
  label(22, bottom + 9, '0.03 MHz', 'start', '#dcdcdc');
  label(w - 4, bottom + 9, '4.808', 'end', '#dcdcdc');
  if (panel.dataset.chart === 'a') el(svg, 'path', { d: `M10 ${Y(131)}H25`, stroke: cfg.color });

  el(svg, 'path', { d: trace(cfg, kx, ky, random(7)), stroke: cfg.color, fill: 'none', 'stroke-width': 1, 'stroke-linejoin': 'bevel', 'shape-rendering': 'crispEdges' });

  for (const [y, t] of cfg.yRulers) {
    const cy = Y(y);
    el(svg, 'path', { d: `M48 ${cy}H${right}`, stroke: '#f4f4f4', 'stroke-dasharray': '18 6' });
    el(svg, 'path', { d: `M3 ${cy - 7}H35L42 ${cy}L35 ${cy + 8}H3L1 ${cy + 6}V${cy - 5}Z`, fill: cfg.color });
    label(19, cy, t, 'middle', '#fff');
  }
  for (const [x, t] of cfg.xRulers) {
    const cx = X(x);
    el(svg, 'path', { d: `M${cx} ${Y(0)}V${bottom - 6}`, stroke: '#f4f4f4', 'stroke-dasharray': '18 6', 'stroke-dashoffset': 10 });
    el(svg, 'path', { d: `M${cx} ${bottom - 6}L${cx + 7} ${bottom + 1}H${cx - 7}Z`, fill: '#c2e6ff' });
    el(svg, 'rect', { x: cx - 35, y: bottom, width: 70, height: 18, rx: 3, fill: '#c2e6ff' });
    label(cx, bottom + 9, t, 'middle', '#1c1c1c');
  }

  const mini = panel.querySelector('.mini');
  mini.replaceChildren();
  let mg = '';
  for (let i = 0; i <= 10; i++) mg += `M10 ${Math.round(10 + i * 9.3) + 0.5}H257`;
  for (let d = 0; d < 6; d++) for (let m = 1; m < 10; m++) {
    const x = Math.round(10 + 42 * (d + Math.log10(m))) + 0.5;
    if (x < 258) mg += `M${x} 12V104`;
  }
  el(mini, 'path', { d: mg, stroke: GRID, 'stroke-dasharray': '3 3', fill: 'none' });
  const rand = random(11);
  let d = '';
  for (const [x, y] of cfg.mini) if (x < cfg.miniFrom) d += (d ? 'L' : 'M') + x + ' ' + y;
  for (let x = cfg.miniFrom; x < 248; x++) {
    const amp = 0.5 + 3 * (x - cfg.miniFrom) / (247 - cfg.miniFrom);
    const burst = cfg.miniRise * Math.max(0, Math.min(1, (x - 195) / 35));
    const y = levelAt(cfg.mini, x);
    d += `L${x} ${(y - amp * (0.5 + rand() / 2) - burst * rand()).toFixed(1)}L${x} ${(y + (amp + burst / 4) * (0.5 + rand() / 2)).toFixed(1)}`;
  }
  for (const [x, y] of cfg.miniSpikes) d += `M${x + 0.5} ${y}V${levelAt(cfg.mini, x)}`;
  el(mini, 'path', { d, stroke: cfg.color, fill: 'none', 'stroke-width': 1, 'stroke-linejoin': 'bevel', 'shape-rendering': 'crispEdges' });
  el(mini, 'rect', { x: 155.5, y: 10.5, width: 92, height: 92, fill: 'none', stroke: '#8c8c8c' });
}

const waves = document.getElementById('waves');
for (let i = 0; i < 7; i++) {
  const s = i * 4;
  el(waves, 'path', { d: `M0 41H${8 + s}C${18 + s} 41 ${22 + s} 27 ${34 + s} 27H${44 + s}C${56 + s} 27 ${60 + s} 41 ${70 + s} 41`, stroke: '#7aa3c8' });
  el(waves, 'path', { d: `M${66 + s} 41C${78 + s} 41 ${82 + s} 27 ${94 + s} 27`, stroke: '#1f4a66' });
}

function drawAll() { document.querySelectorAll('.panel').forEach(drawPlot); }
drawAll();
addEventListener('resize', drawAll);
```
